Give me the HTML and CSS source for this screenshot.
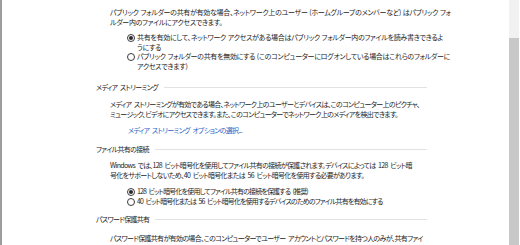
FILE: index.html
```html
<!DOCTYPE html>
<html lang="ja">
<head>
<meta charset="utf-8">
<link rel="stylesheet" href="styles.css">
</head>
<body>
<div class="window">
  <div class="content">
    <section class="group top">
      <p class="para first">パブリック フォルダーの共有が有効な場合、ネットワーク上のユーザー (ホームグループのメンバーなど) はパブリック フォ<br>ルダー内のファイルにアクセスできます。</p>
      <div class="radios r1">
        <div class="radio"><span class="dot on"></span><span class="label">共有を有効にして、ネットワーク アクセスがある場合はパブリック フォルダー内のファイルを読み書きできるよ<br>うにする</span></div>
        <div class="radio"><span class="dot"></span><span class="label">パブリック フォルダーの共有を無効にする (このコンピューターにログオンしている場合はこれらのフォルダーに<br>アクセスできます)</span></div>
      </div>
    </section>

    <section class="group tight">
      <div class="header h1">メディア ストリーミング</div>
      <p class="para after-h">メディア ストリーミングが有効である場合、ネットワーク上のユーザーとデバイスは、このコンピューター上のピクチャ、<br>ミュージック、ビデオにアクセスできます。また、このコンピューターでネットワーク上のメディアを検出できます。</p>
      <a class="link">メディア ストリーミング オプションの選択...</a>

      <div class="header h2">ファイル共有の接続</div>
      <p class="para after-h2">Windows では、128 ビット暗号化を使用してファイル共有の接続が保護されます。デバイスによっては 128 ビット暗<br>号化をサポートしないため、40 ビット暗号化または 56 ビット暗号化を使用する必要があります。</p>
      <div class="radios r2">
        <div class="radio"><span class="dot on"></span><span class="label">128 ビット暗号化を使用してファイル共有の接続を保護する (推奨)</span></div>
        <div class="radio"><span class="dot"></span><span class="label">40 ビット暗号化または 56 ビット暗号化を使用するデバイスのためのファイル共有を有効にする</span></div>
      </div>

      <div class="header h3">パスワード保護共有</div>
      <p class="para after-h3">パスワード保護共有が有効の場合、このコンピューターでユーザー アカウントとパスワードを持つ人のみが、共有ファイ</p>
    </section>
  </div>
  <div class="scrollbar">
    <div class="track"></div>
    <div class="thumb"></div>
  </div>
</div>
</body>
</html>
```

FILE: styles.css
```css
html, body {
  margin: 0;
  padding: 0;
  background: #ffffff;
}
body {
  width: 520px;
  height: 245px;
  overflow: hidden;
  font-family: "Noto Sans CJK JP", "Noto Sans", sans-serif;
  font-size: 7px;
  line-height: 10px;
  color: #1c1c1c;
  font-feature-settings: "palt";
}
.window {
  display: flex;
  height: 245px;
  border-left: 2px solid #9c9c9c;
  box-sizing: border-box;
}
.content {
  flex: 1;
  padding-left: 94px;
  padding-top: 7px;
  overflow: hidden;
}
.group.top {
  letter-spacing: -0.3px;
  word-spacing: 0.5px;
}
.group.tight {
  letter-spacing: -0.68px;
  word-spacing: 1.6px;
}
.para {
  margin: 0 0 0 14px;
  white-space: nowrap;
}
.radios {
  margin-left: 31px;
  line-height: 9.5px;
}
.r1 { margin-top: 6px; }
.r2 {
  margin-top: 7px;
  letter-spacing: -0.85px;
}
.radio {
  display: flex;
  align-items: flex-start;
  white-space: nowrap;
}
.dot {
  flex: none;
  width: 8px;
  height: 8px;
  box-sizing: border-box;
  border: 1px solid #3a3a3a;
  border-radius: 50%;
  margin: 1px 2px 0 0;
  display: flex;
  align-items: center;
  justify-content: center;
}
.dot.on::after {
  content: "";
  width: 4px;
  height: 4px;
  border-radius: 50%;
  background: #2a2a2a;
}
.header {
  width: 331px;
  display: flex;
  align-items: center;
  white-space: nowrap;
  color: #222;
}
.header::after {
  content: "";
  flex: 1;
  height: 1px;
  background: #e2e2e2;
  margin-left: 6px;
}
.h1 { margin-top: 11px; }
.h2 { margin-top: 9px; }
.h3 { margin-top: 8px; }
.after-h { margin-top: 7px; }
.after-h2 { margin-top: 6px; }
.after-h3 { margin-top: 9px; }
.link {
  display: block;
  margin: 6px 0 0 32px;
  color: #2a66c8;
  white-space: nowrap;
}
.scrollbar {
  flex: none;
  width: 10px;
  margin-right: 1px;
  display: flex;
  flex-direction: column;
}
.track {
  height: 38px;
  background: #f1f1f1;
}
.thumb {
  flex: 1;
  background: #c8c8c8;
}
```
